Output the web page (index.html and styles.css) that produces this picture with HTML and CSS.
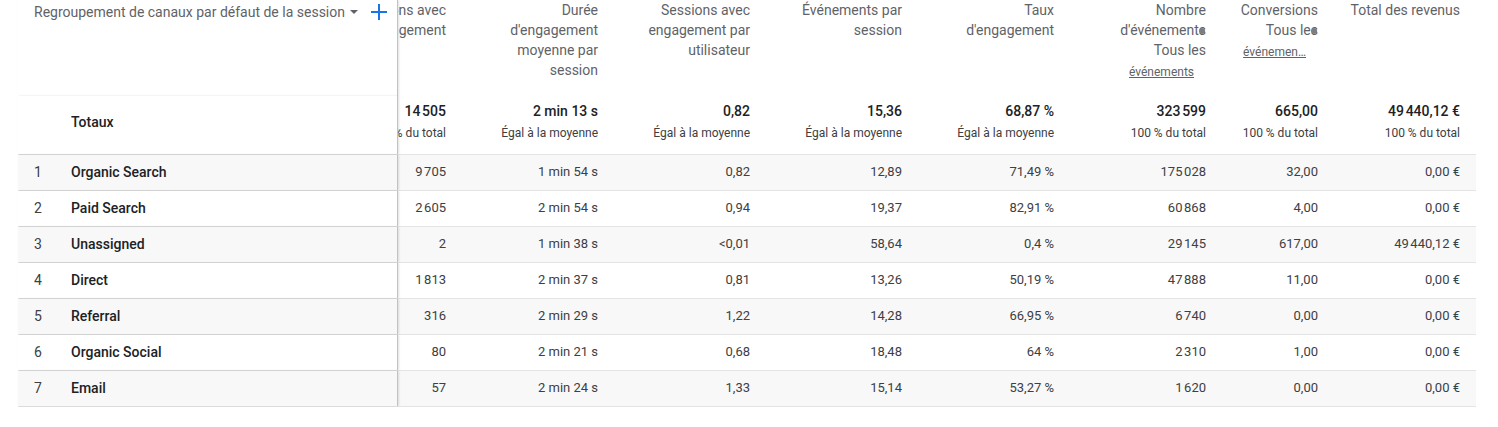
FILE: index.html
```html
<!DOCTYPE html>
<html lang="fr">
<head>
<meta charset="utf-8">
<title>Rapport</title>
<link rel="stylesheet" href="styles.css">
</head>
<body>
<div class="table">
  <div class="row head">
    <div class="dim dim-head">
      <span class="dim-title">Regroupement de canaux par défaut de la session</span>
      <svg class="caret" width="8" height="4" viewBox="0 0 8 4"><path d="M0 0h8L4 4z" fill="#5f6368"/></svg>
      <svg class="plus" width="16" height="16" viewBox="0 0 16 16"><path d="M8 0v16M0 8h16" stroke="#1a73e8" stroke-width="2"/></svg>
    </div>
    <div class="cell clip"><span class="label">Sessions avec engagement</span></div>
    <div class="cell"><span class="label">Durée d'engagement moyenne par session</span></div>
    <div class="cell"><span class="label">Sessions avec engagement par utilisateur</span></div>
    <div class="cell"><span class="label">Événements par session</span></div>
    <div class="cell"><span class="label">Taux d'engagement</span></div>
    <div class="cell"><span class="label">Nombre d'événements<i class="dot"></i> Tous les</span><a class="link">événements</a></div>
    <div class="cell"><span class="label">Conversions Tous les<i class="dot"></i></span><a class="link trunc">événemen…</a></div>
    <div class="cell"><span class="label">Total des revenus</span></div>
  </div>

  <div class="row totals">
    <div class="dim dim-total"><span class="num"></span><span class="name">Totaux</span></div>
    <div class="cell clip"><b>14&#8239;505</b><small>100 % du total</small></div>
    <div class="cell"><b>2 min 13 s</b><small>Égal à la moyenne</small></div>
    <div class="cell"><b>0,82</b><small>Égal à la moyenne</small></div>
    <div class="cell"><b>15,36</b><small>Égal à la moyenne</small></div>
    <div class="cell"><b>68,87&nbsp;%</b><small>Égal à la moyenne</small></div>
    <div class="cell"><b>323&#8239;599</b><small>100 % du total</small></div>
    <div class="cell"><b>665,00</b><small>100 % du total</small></div>
    <div class="cell"><b>49&#8239;440,12&nbsp;€</b><small>100 % du total</small></div>
  </div>

  <div class="row data odd">
    <div class="dim"><span class="num">1</span><span class="name">Organic Search</span></div>
    <div class="cell clip">9&#8239;705</div><div class="cell">1 min 54 s</div><div class="cell">0,82</div><div class="cell">12,89</div><div class="cell">71,49&nbsp;%</div><div class="cell">175&#8239;028</div><div class="cell">32,00</div><div class="cell">0,00&nbsp;€</div>
  </div>
  <div class="row data">
    <div class="dim"><span class="num">2</span><span class="name">Paid Search</span></div>
    <div class="cell clip">2&#8239;605</div><div class="cell">2 min 54 s</div><div class="cell">0,94</div><div class="cell">19,37</div><div class="cell">82,91&nbsp;%</div><div class="cell">60&#8239;868</div><div class="cell">4,00</div><div class="cell">0,00&nbsp;€</div>
  </div>
  <div class="row data odd">
    <div class="dim"><span class="num">3</span><span class="name">Unassigned</span></div>
    <div class="cell clip">2</div><div class="cell">1 min 38 s</div><div class="cell">&lt;0,01</div><div class="cell">58,64</div><div class="cell">0,4&nbsp;%</div><div class="cell">29&#8239;145</div><div class="cell">617,00</div><div class="cell">49&#8239;440,12&nbsp;€</div>
  </div>
  <div class="row data">
    <div class="dim"><span class="num">4</span><span class="name">Direct</span></div>
    <div class="cell clip">1&#8239;813</div><div class="cell">2 min 37 s</div><div class="cell">0,81</div><div class="cell">13,26</div><div class="cell">50,19&nbsp;%</div><div class="cell">47&#8239;888</div><div class="cell">11,00</div><div class="cell">0,00&nbsp;€</div>
  </div>
  <div class="row data odd">
    <div class="dim"><span class="num">5</span><span class="name">Referral</span></div>
    <div class="cell clip">316</div><div class="cell">2 min 29 s</div><div class="cell">1,22</div><div class="cell">14,28</div><div class="cell">66,95&nbsp;%</div><div class="cell">6&#8239;740</div><div class="cell">0,00</div><div class="cell">0,00&nbsp;€</div>
  </div>
  <div class="row data">
    <div class="dim"><span class="num">6</span><span class="name">Organic Social</span></div>
    <div class="cell clip">80</div><div class="cell">2 min 21 s</div><div class="cell">0,68</div><div class="cell">18,48</div><div class="cell">64&nbsp;%</div><div class="cell">2&#8239;310</div><div class="cell">1,00</div><div class="cell">0,00&nbsp;€</div>
  </div>
  <div class="row data odd last">
    <div class="dim"><span class="num">7</span><span class="name">Email</span></div>
    <div class="cell clip">57</div><div class="cell">2 min 24 s</div><div class="cell">1,33</div><div class="cell">15,14</div><div class="cell">53,27&nbsp;%</div><div class="cell">1&#8239;620</div><div class="cell">0,00</div><div class="cell">0,00&nbsp;€</div>
  </div>
</div>
</body>
</html>
```

FILE: styles.css
```css
* { box-sizing: border-box; }
body {
  margin: 0;
  background: #fff;
  color: #202124;
  font-family: Roboto, "Noto Sans", "Liberation Sans", sans-serif;
}
.table {
  margin-left: 18px;
  width: 1458px;
}
.row {
  display: grid;
  grid-template-columns: 380px 64px repeat(5, 152px) 112px 142px;
  background: #fff;
}
.dim {
  position: relative;
  z-index: 1;
  display: flex;
  align-items: center;
  padding-left: 16px;
  background: inherit;
  border-right: 1px solid #c2c2c2;
  box-shadow: 1px 0 2px rgba(0, 0, 0, 0.12);
}
.cell {
  display: flex;
  flex-direction: column;
  align-items: flex-end;
  padding-right: 16px;
  overflow: hidden;
  text-align: right;
  white-space: nowrap;
}

/* header */
.head { height: 96px; }
.head .dim { align-items: flex-start; }
.dim-title {
  font-size: 14px;
  line-height: 24px;
  color: #5f6368;
  white-space: nowrap;
}
.caret { margin: 10px 0 0 5px; }
.plus { margin: 4px 10px 0 auto; }
.head .cell { white-space: normal; }
.label {
  position: relative;
  display: block;
  max-width: 112px;
  font-size: 14px;
  line-height: 20px;
  color: #5f6368;
}
.clip .label { width: 112px; max-width: none; flex-shrink: 0; }
.dot {
  position: absolute;
  right: 1px;
  top: 28px;
  width: 6px;
  height: 6px;
  border-radius: 50%;
  background: #7a7e83;
}
.link {
  margin-right: 12px;
  font-size: 12px;
  line-height: 24px;
  color: #5f6368;
  text-decoration: underline;
  white-space: nowrap;
}

/* totals */
.totals { height: 58px; }
.totals .cell { padding-top: 5px; }
.totals b {
  font-weight: 500;
  font-size: 14px;
  line-height: 20px;
  color: #202124;
}
.totals small {
  margin-top: 4px;
  font-size: 12px;
  line-height: 16px;
  color: #3c4043;
}
.dim-total { align-items: flex-start; padding-top: 16px; }

/* data rows */
.data {
  height: 36px;
  border-top: 1px solid #e4e4e4;
}
.data.odd { background: #f8f8f8; }
.data.last { border-bottom: 1px solid #e4e4e4; height: 37px; }
.data .cell,
.data .dim { padding-bottom: 2px; }
.data .cell {
  justify-content: center;
  font-size: 13px;
  color: #3c4043;
}
.num {
  width: 37px;
  flex-shrink: 0;
  font-size: 14px;
  color: #3c4043;
}
.name {
  font-size: 14px;
  font-weight: 500;
  line-height: 20px;
  color: #202124;
}
```
